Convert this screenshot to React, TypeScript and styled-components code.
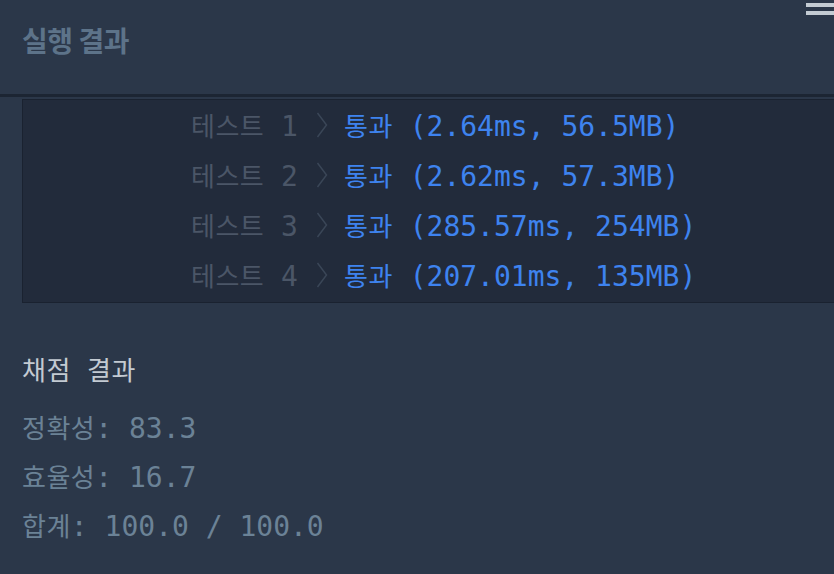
import React from "react";
import styled, { createGlobalStyle } from "styled-components";

const GlobalStyle = createGlobalStyle`
  html, body {
    margin: 0;
    padding: 0;
    background: #2b3749;
  }
  body {
    width: 834px;
    height: 574px;
    overflow: hidden;
    font-family: "DejaVu Sans Mono", "Noto Sans CJK KR", monospace;
  }
`;

const Page = styled.div`
  position: relative;
  width: 834px;
  height: 574px;
  overflow: hidden;
  background: #2b3749;
  display: flex;
  flex-direction: column;
`;

const MenuButton = styled.div`
  position: absolute;
  top: 3px;
  right: 0;
  width: 28px;
  display: flex;
  flex-direction: column;
  gap: 4px;
`;

const MenuBar = styled.span`
  display: block;
  height: 4px;
  background: #c3cbd3;
`;

const Header = styled.header`
  height: 94px;
  box-sizing: border-box;
  padding: 23px 0 0 22px;
`;

const Title = styled.h2`
  margin: 0;
  font-family: "Noto Sans CJK KR", sans-serif;
  font-weight: 700;
  font-size: 28px;
  line-height: 34px;
  letter-spacing: -0.5px;
  color: #5d7389;
`;

const Divider = styled.div`
  height: 3px;
  background: #1c2533;
`;

const Body = styled.main`
  padding: 2px 0 0 22px;
  display: flex;
  flex-direction: column;
`;

const ResultBox = styled.div`
  margin-right: -4px;
  background: #222b3b;
  border: 1px solid #1a2230;
  padding: 0 0 2px 168px;
  display: flex;
  flex-direction: column;
`;

const Row = styled.div`
  height: 50px;
  line-height: 50px;
  white-space: pre;
`;

const Hangul = styled.span<{ $tone: string }>`
  font-family: "Noto Sans CJK KR", sans-serif;
  font-size: 26px;
  letter-spacing: 0.5px;
  color: ${(p) => p.$tone};
`;

const Mono = styled.span<{ $tone: string }>`
  font-family: "DejaVu Sans Mono", monospace;
  font-size: 28px;
  color: ${(p) => p.$tone};
`;

const Chevron = styled.svg`
  display: inline-block;
  width: 12px;
  height: 26px;
  margin: 0 16px 0 18px;
  vertical-align: -2px;
`;

const Score = styled.section`
  padding: 44px 0 0 22px;
  display: flex;
  flex-direction: column;
`;

const SectionTitle = styled.h3`
  margin: 0 0 8px;
  font-family: "DejaVu Sans Mono", "Noto Sans CJK KR", monospace;
  font-weight: 400;
  font-size: 26px;
  letter-spacing: 0.5px;
  line-height: 48px;
  color: #c3cad2;
  white-space: pre;
`;

const ScoreLine = styled.div`
  height: 50px;
  line-height: 50px;
  white-space: pre;
  margin-top: -1px;
`;

const GRAY = "#4b5667";
const BLUE = "#3e83ef";
const MUTED = "#6b8296";

const tests = [
  { n: 1, r: "(2.64ms, 56.5MB)" },
  { n: 2, r: "(2.62ms, 57.3MB)" },
  { n: 3, r: "(285.57ms, 254MB)" },
  { n: 4, r: "(207.01ms, 135MB)" },
];

const scores = [
  { k: "정확성", v: ": 83.3" },
  { k: "효율성", v: ": 16.7" },
  { k: "합계", v: ": 100.0 / 100.0" },
];

export default function App() {
  return (
    <>
      <GlobalStyle />
      <Page>
        <MenuButton>
          <MenuBar />
          <MenuBar />
        </MenuButton>
        <Header>
          <Title>실행 결과</Title>
        </Header>
        <Divider />
        <Body>
          <ResultBox>
            {tests.map((t) => (
              <Row key={t.n}>
                <Hangul $tone={GRAY}>테스트</Hangul>
                <Mono $tone={GRAY}>{` ${t.n}`}</Mono>
                <Chevron viewBox="0 0 12 26">
                  <polyline
                    points="1.5,1 10.5,13 1.5,25"
                    fill="none"
                    stroke="#3a4657"
                    strokeWidth="1.5"
                  />
                </Chevron>
                <Hangul $tone={BLUE}>통과</Hangul>
                <Mono $tone={BLUE}>{` ${t.r}`}</Mono>
              </Row>
            ))}
          </ResultBox>
        </Body>
        <Score>
          <SectionTitle>채점 결과</SectionTitle>
          {scores.map((s) => (
            <ScoreLine key={s.k}>
              <Hangul $tone={MUTED}>{s.k}</Hangul>
              <Mono $tone={MUTED}>{s.v}</Mono>
            </ScoreLine>
          ))}
        </Score>
      </Page>
    </>
  );
}
